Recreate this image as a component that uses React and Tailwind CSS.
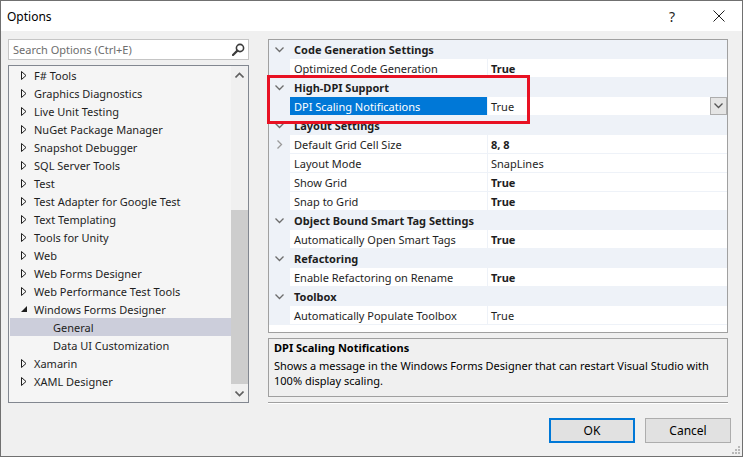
import React from 'react'

const font = { fontFamily: '"Segoe UI", "Noto Sans", sans-serif' }

// Tree items shown in the options list
const treeItems = [
  { label: 'F# Tools' },
  { label: 'Graphics Diagnostics' },
  { label: 'Live Unit Testing' },
  { label: 'NuGet Package Manager' },
  { label: 'Snapshot Debugger' },
  { label: 'SQL Server Tools' },
  { label: 'Test' },
  { label: 'Test Adapter for Google Test' },
  { label: 'Text Templating' },
  { label: 'Tools for Unity' },
  { label: 'Web' },
  { label: 'Web Forms Designer' },
  { label: 'Web Performance Test Tools' },
  { label: 'Windows Forms Designer', open: true },
  { label: 'General', child: true, selected: true },
  { label: 'Data UI Customization', child: true },
  { label: 'Xamarin' },
  { label: 'XAML Designer' },
]

// Property grid rows
const gridRows = [
  { cat: 'Code Generation Settings' },
  { name: 'Optimized Code Generation', value: 'True', bold: true },
  { cat: 'High-DPI Support' },
  { name: 'DPI Scaling Notifications', value: 'True', selected: true },
  { cat: 'Layout Settings' },
  { name: 'Default Grid Cell Size', value: '8, 8', bold: true, expandable: true },
  { name: 'Layout Mode', value: 'SnapLines' },
  { name: 'Show Grid', value: 'True', bold: true },
  { name: 'Snap to Grid', value: 'True', bold: true },
  { cat: 'Object Bound Smart Tag Settings' },
  { name: 'Automatically Open Smart Tags', value: 'True', bold: true },
  { cat: 'Refactoring' },
  { name: 'Enable Refactoring on Rename', value: 'True', bold: true },
  { cat: 'Toolbox' },
  { name: 'Automatically Populate Toolbox', value: 'True' },
]

function Collapsed() {
  return (
    <svg width="6" height="9" viewBox="0 0 6 9" className="shrink-0">
      <path d="M0.5 0.5 L5 4.5 L0.5 8.5 Z" fill="none" stroke="#1e1e1e" strokeWidth="1" />
    </svg>
  )
}

function Expanded() {
  return (
    <svg width="7" height="7" viewBox="0 0 7 7" className="shrink-0">
      <path d="M6 0 L6 6 L0 6 Z" fill="#1e1e1e" />
    </svg>
  )
}

function ChevronDown({ color = '#6d6d6d' }) {
  return (
    <svg width="9" height="6" viewBox="0 0 9 6">
      <path d="M0.5 0.5 L4.5 4.5 L8.5 0.5" fill="none" stroke={color} strokeWidth="1.3" />
    </svg>
  )
}

function ChevronRight() {
  return (
    <svg width="6" height="9" viewBox="0 0 6 9">
      <path d="M0.5 0.5 L4.5 4.5 L0.5 8.5" fill="none" stroke="#9a9a9a" strokeWidth="1.3" />
    </svg>
  )
}

function ChevronUp() {
  return (
    <svg width="9" height="6" viewBox="0 0 9 6">
      <path d="M0.5 5.5 L4.5 1.5 L8.5 5.5" fill="none" stroke="#606060" strokeWidth="1.6" />
    </svg>
  )
}

function SearchIcon() {
  return (
    <svg width="13" height="13" viewBox="0 0 13 13">
      <circle cx="8" cy="5" r="3.6" fill="none" stroke="#3c3c3c" strokeWidth="1.6" />
      <path d="M5.4 7.6 L1 12" stroke="#3c3c3c" strokeWidth="2.2" strokeLinecap="round" />
    </svg>
  )
}

function TreeRow({ item }) {
  return (
    <div
      className={`flex items-center h-[18px] ${item.selected ? 'bg-[#cccedb]' : ''}`}
    >
      {item.child ? (
        <div className="w-[43px] shrink-0" />
      ) : (
        <div className="w-[24px] pl-[11px] shrink-0 flex items-center">
          {item.open ? <Expanded /> : <Collapsed />}
        </div>
      )}
      <span className="whitespace-nowrap text-[#1e1e1e]">{item.label}</span>
    </div>
  )
}

function GridRow({ row }) {
  if (row.cat) {
    return (
      <div className="flex h-[19px] bg-[#eef2f8] items-center">
        <div className="w-[21px] flex justify-center items-center shrink-0">
          <ChevronDown />
        </div>
        <span className="pl-[4px] font-bold text-[#1e1e1e] whitespace-nowrap">{row.cat}</span>
      </div>
    )
  }
  return (
    <div className="flex h-[19px]">
      <div className="w-[21px] bg-[#eef2f8] flex justify-center items-center shrink-0">
        {row.expandable && <ChevronRight />}
      </div>
      <div
        className={`w-[197px] shrink-0 flex items-center pl-[4px] border-b border-[#eef2f8] ${
          row.selected ? 'bg-[#0078d7] text-white' : 'bg-white text-[#1e1e1e]'
        }`}
      >
        <span className="whitespace-nowrap">{row.name}</span>
      </div>
      <div className="flex-1 flex items-center border-l border-b border-[#eef2f8] bg-white pl-[3px]">
        <span className={`whitespace-nowrap ${row.bold ? 'font-bold' : ''} text-[#1e1e1e]`}>
          {row.value}
        </span>
        {row.selected && (
          <div className="ml-auto w-[17px] h-[18px] bg-[#e5e5e5] border border-[#adadad] flex items-center justify-center">
            <ChevronDown color="#555" />
          </div>
        )}
      </div>
    </div>
  )
}

export default function App() {
  return (
    <div
      className="w-[743px] h-[457px] bg-[#f0f0f0] border border-[#707070] flex flex-col text-[11px] leading-[15px] overflow-hidden relative"
      style={font}
    >
      {/* Title bar */}
      <div className="h-[30px] bg-white flex items-center shrink-0">
        <span className="pl-[6px] text-[12px] text-[#000]">Options</span>
        <div className="ml-auto flex items-center pr-[3px]">
          <span className="w-[46px] text-center text-[14px] text-[#1e1e1e] pl-[4px]">?</span>
          <div className="w-[46px] flex justify-center pl-[6px]">
            <svg width="12" height="12" viewBox="0 0 12 12">
              <path d="M0.5 0.5 L11.5 11.5 M11.5 0.5 L0.5 11.5" stroke="#1e1e1e" strokeWidth="1" />
            </svg>
          </div>
        </div>
      </div>

      {/* Body */}
      <div className="flex pt-[8px] pl-[7px]">
        {/* Left column */}
        <div className="w-[241px] flex flex-col shrink-0">
          <div className="h-[21px] bg-white border border-[#c5c5c5] flex items-center pl-[4px] pr-[3px]">
            <span className="text-[#6d6d6d] whitespace-nowrap">Search Options (Ctrl+E)</span>
            <div className="ml-auto">
              <SearchIcon />
            </div>
          </div>
          <div className="mt-[5px] h-[338px] border border-[#828790] bg-[#f5f5f5] flex">
            <div className="flex-1 flex flex-col pl-[1px]">
              {treeItems.map((it) => (
                <TreeRow key={it.label} item={it} />
              ))}
            </div>
            <div className="w-[17px] bg-[#f0f0f0] flex flex-col items-center">
              <div className="h-[17px] flex items-center justify-center">
                <ChevronUp />
              </div>
              <div className="flex-1 w-full flex flex-col">
                <div className="h-[127px]" />
                <div className="h-[174px] w-full bg-[#cdcdcd]" />
              </div>
              <div className="h-[17px] flex items-center justify-center">
                <svg width="9" height="6" viewBox="0 0 9 6">
                  <path d="M0.5 0.5 L4.5 4.5 L8.5 0.5" fill="none" stroke="#606060" strokeWidth="1.6" />
                </svg>
              </div>
            </div>
          </div>
        </div>

        {/* Right column */}
        <div className="ml-[19px] w-[460px] flex flex-col shrink-0">
          <div className="h-[294px] border border-[#a0a0a0] bg-white flex flex-col">
            {gridRows.map((r, i) => (
              <GridRow key={i} row={r} />
            ))}
          </div>
          <div className="mt-[5px] h-[59px] border border-[#a0a0a0] bg-[#f0f0f0] px-[5px] pt-[1px]">
            <div className="font-bold text-[#000]">DPI Scaling Notifications</div>
            <div className="mt-[3px] text-[#000] leading-[15px]">
              Shows a message in the Windows Forms Designer that can restart Visual Studio with 100% display scaling.
            </div>
          </div>
          <div className="mt-[5px] h-[1px] bg-[#a0a0a0]" />
          <div className="h-[1px] bg-white" />
        </div>
      </div>

      {/* Buttons */}
      <div className="flex justify-end pr-[11px] mt-[14px] gap-[10px]">
        <button className="w-[86px] h-[25px] bg-[#e1e1e1] border-2 border-[#0078d7] text-[12px] text-[#000]">OK</button>
        <button className="w-[86px] h-[25px] bg-[#e1e1e1] border border-[#adadad] text-[12px] text-[#000]">Cancel</button>
      </div>

      {/* Resize grip */}
      <svg width="10" height="10" viewBox="0 0 10 10" className="absolute right-[1px] bottom-[1px]">
        <rect x="7" y="1" width="2" height="2" fill="#b8b8b8" />
        <rect x="4" y="4" width="2" height="2" fill="#b8b8b8" />
        <rect x="7" y="4" width="2" height="2" fill="#b8b8b8" />
        <rect x="1" y="7" width="2" height="2" fill="#b8b8b8" />
        <rect x="4" y="7" width="2" height="2" fill="#b8b8b8" />
        <rect x="7" y="7" width="2" height="2" fill="#b8b8b8" />
      </svg>

      {/* Red highlight box */}
      <div className="absolute left-[266px] top-[74px] w-[263px] h-[49px] border-[3px] border-[#e81123] pointer-events-none" />
    </div>
  )
}
